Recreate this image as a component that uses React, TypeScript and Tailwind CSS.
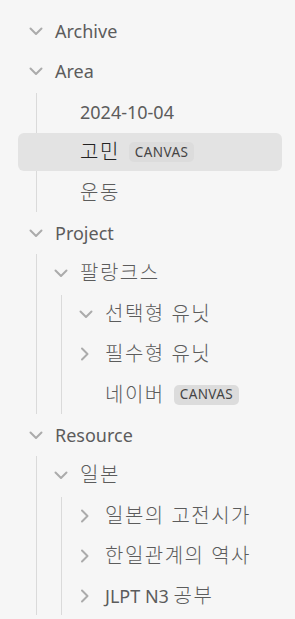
import React from 'react';

type Node = {
  name: string;
  open?: boolean;
  folder?: boolean;
  badge?: string;
  active?: boolean;
  children?: Node[];
};

const tree: Node[] = [
  { name: 'Archive', folder: true, open: true },
  {
    name: 'Area',
    folder: true,
    open: true,
    children: [
      { name: '2024-10-04' },
      { name: '고민', badge: 'CANVAS', active: true },
      { name: '운동' },
    ],
  },
  {
    name: 'Project',
    folder: true,
    open: true,
    children: [
      {
        name: '팔랑크스',
        folder: true,
        open: true,
        children: [
          { name: '선택형 유닛', folder: true, open: true },
          { name: '필수형 유닛', folder: true },
          { name: '네이버', badge: 'CANVAS' },
        ],
      },
    ],
  },
  {
    name: 'Resource',
    folder: true,
    open: true,
    children: [
      {
        name: '일본',
        folder: true,
        open: true,
        children: [
          { name: '일본의 고전시가', folder: true },
          { name: '한일관계의 역사', folder: true },
          { name: 'JLPT N3 공부', folder: true },
        ],
      },
    ],
  },
];

const rowPad = ['pl-[10px]', 'pl-[35px]', 'pl-[60px]'];
const guide = ['ml-[18px]', 'ml-[43px]', 'ml-[68px]'];
const unguide = ['-ml-[19px]', '-ml-[44px]', '-ml-[69px]'];

const Chevron = ({ open }: { open?: boolean }) => (
  <svg
    width="16"
    height="16"
    viewBox="0 0 16 16"
    fill="none"
    stroke="#ababab"
    strokeWidth="2"
    strokeLinecap="round"
    strokeLinejoin="round"
  >
    <path d={open ? 'M2.5 5.5L8 11l5.5-5.5' : 'M4 2.5L9.5 8 4 13.5'} />
  </svg>
);

// Korean runs get a bigger, wider setting, like the system Korean font in the picture
const Label = ({ text }: { text: string }) => {
  const parts = text.split(/([가-힣]+(?:\s+[가-힣]+)*)/).filter(Boolean);
  return (
    <span className="text-[18px] leading-none whitespace-pre">
      {parts.map((p, i) =>
        /[가-힣]/.test(p) ? (
          <span key={i} className="text-[20px] font-light tracking-[1.5px]">
            {p}
          </span>
        ) : (
          <span key={i}>{p}</span>
        )
      )}
    </span>
  );
};

const Row = ({ node, depth }: { node: Node; depth: number }) => (
  <div
    className={`flex h-[38px] items-center rounded-md mb-[2.4px] ${rowPad[depth]} ${
      node.active ? 'bg-[#e3e3e3] text-[#222]' : 'text-[#5c5c5c]'
    }`}
  >
    <div className="w-[27px] flex items-center">{node.folder && <Chevron open={node.open} />}</div>
    <Label text={node.name} />
    {node.badge && (
      <span className="ml-[9px] rounded-[5px] bg-[#dcdcdc] px-[6px] h-[20px] flex items-center text-[13.5px] tracking-[0.4px] text-[#444]">
        {node.badge}
      </span>
    )}
  </div>
);

const Branch = ({ nodes, depth }: { nodes: Node[]; depth: number }) => (
  <div>
    {nodes.map((n) => (
      <div key={n.name}>
        <Row node={n} depth={depth} />
        {n.children && (
          <div className={`${guide[depth]} border-l border-[#dadada]`}>
            <div className={unguide[depth]}>
              <Branch nodes={n.children} depth={depth + 1} />
            </div>
          </div>
        )}
      </div>
    ))}
  </div>
);

export default function App() {
  return (
    <div
      className="min-h-[619px] w-[295px] bg-[#f6f6f6] pt-[12px] overflow-hidden"
      style={{ fontFamily: '"Noto Sans", "Noto Sans CJK KR", sans-serif' }}
    >
      <div className="pl-[18px] pr-[13px]">
        <Branch nodes={tree} depth={0} />
      </div>
    </div>
  );
}
